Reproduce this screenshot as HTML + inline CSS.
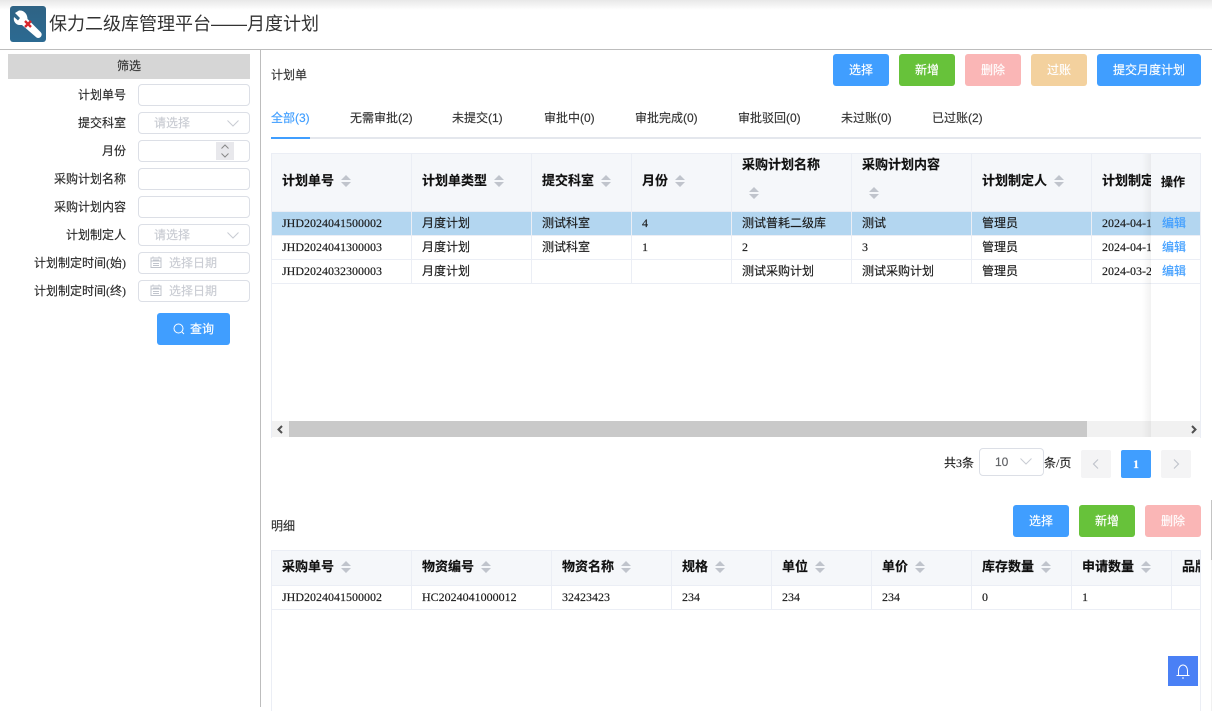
<!DOCTYPE html>
<html><head><meta charset="utf-8">
<style>
html,body{margin:0;padding:0;background:#fff}
#p{position:relative;width:1212px;height:711px;overflow:hidden;background:#fff;font:12px/16px "Liberation Serif","WenQuanYi Zen Hei","Noto Sans CJK SC",serif;color:#222;-webkit-text-stroke:.15px currentColor}
#p div,#p span.a,#p svg{position:absolute}
.t{white-space:nowrap}
.l{right:1086px;text-align:right;white-space:nowrap;color:#2a2a2a;height:16px}
.i{left:138px;width:110px;height:20px;border:1px solid #dcdfe6;border-radius:4px;background:#fff}
.ph{color:#c9ccd3;white-space:nowrap;top:2px}
.b{height:32px;border-radius:3px;color:#fff;text-align:center;line-height:32px;top:54px;white-space:nowrap}
.blue{background:#409eff}.green{background:#67c23a}.red{background:#fab6b6}.or{background:#f3d19e}
.tab{top:110px;white-space:nowrap;color:#333;font-family:"Liberation Sans","WenQuanYi Zen Hei",sans-serif}
.bg{background:#ebeef5}
.h{font-weight:bold;color:#111;white-space:nowrap}
.c{white-space:nowrap;color:#1a1a1a}
.e{color:#409eff;white-space:nowrap;left:1162px}
.s{width:10px;height:12px}
</style></head><body><div id="p">

<div style="left:0;top:0;width:1212px;height:10px;background:linear-gradient(#e8e8e8,#fff)"></div>
<svg style="left:10px;top:6px" width="36" height="36" viewBox="0 0 36 36">
<defs><linearGradient id="g" x1="0" y1="0" x2="0" y2="1"><stop offset="0" stop-color="#2f6384"/><stop offset="1" stop-color="#2c6a92"/></linearGradient></defs>
<rect width="36" height="36" rx="3" fill="url(#g)"/>
<path d="M9 4.500 L5 7 L10 12 L8 14.500 L4 11 C3 15 5.500 19 10 19 L12 19 L26.500 31.500 C28 32.500 30 32 31 30.500 C32 29 32 27.500 30.500 26 L17.500 13 C17.500 8 14 4 9 4.500Z" fill="#fff"/>
<path d="M15 15 L21 21 M21 15 L15 21" stroke="#d9262c" stroke-width="2.400"/>
</svg>
<div class="t" style="left:49px;top:12px;font:18px/24px 'Liberation Sans','WenQuanYi Zen Hei',sans-serif;color:#333;-webkit-text-stroke:0">保力二级库管理平台——月度计划</div>
<div style="left:0;top:49px;width:1212px;height:1px;background:#bdbdbd"></div>
<div style="left:260px;top:50px;width:1px;height:657px;background:#bdbdbd"></div>

<div style="left:8px;top:54px;width:242px;height:25px;background:#d6d6d6;text-align:center;line-height:24px;color:#333">筛选</div>

<div class="l" style="top:87px">计划单号</div><div class="i" style="top:84px"></div>
<div class="l" style="top:115px">提交科室</div><div class="i" style="top:112px"><div class="ph" style="left:15px">请选择</div><svg style="left:88px;top:7px" width="12" height="7" viewBox="0 0 12 7"><path d="M.5.5 6 6 11.500.5" fill="none" stroke="#c9ccd3"/></svg></div>
<div class="l" style="top:143px">月份</div><div class="i" style="top:140px"><div style="left:77px;top:1px;width:18px;height:18px;background:#e8e8ec"></div><svg style="left:81px;top:2px" width="10" height="16" viewBox="0 0 10 16"><path d="M1.500 5.500 5 2 8.500 5.500M1.500 10.500 5 14 8.500 10.500" fill="none" stroke="#888" stroke-width="1"/></svg></div>
<div class="l" style="top:171px">采购计划名称</div><div class="i" style="top:168px"></div>
<div class="l" style="top:199px">采购计划内容</div><div class="i" style="top:196px"></div>
<div class="l" style="top:227px">计划制定人</div><div class="i" style="top:224px"><div class="ph" style="left:15px">请选择</div><svg style="left:88px;top:7px" width="12" height="7" viewBox="0 0 12 7"><path d="M.5.5 6 6 11.500.5" fill="none" stroke="#c9ccd3"/></svg></div>
<div class="l" style="top:255px">计划制定时间(始)</div><div class="i" style="top:252px"><svg style="left:11px;top:3px" width="12" height="12" viewBox="0 0 12 12"><path d="M1 2h10v9.500H1zM1 5h10M3 4h6M3 .5v2M9 .5v2M3 7.500h6M3 9.500h6" fill="none" stroke="#c0c4cc"/></svg><div class="ph" style="left:30px">选择日期</div></div>
<div class="l" style="top:283px">计划制定时间(终)</div><div class="i" style="top:280px"><svg style="left:11px;top:3px" width="12" height="12" viewBox="0 0 12 12"><path d="M1 2h10v9.500H1zM1 5h10M3 4h6M3 .5v2M9 .5v2M3 7.500h6M3 9.500h6" fill="none" stroke="#c0c4cc"/></svg><div class="ph" style="left:30px">选择日期</div></div>

<div class="b blue" style="left:157px;top:313px;width:73px"><svg style="left:16px;top:10px" width="12" height="12" viewBox="0 0 12 12"><circle cx="5.500" cy="5.500" r="4.500" fill="none" stroke="#fff"/><path d="M9 9l2 2" stroke="#fff"/></svg><div style="left:33px;top:0;line-height:32px">查询</div></div>

<div class="t" style="left:271px;top:67px;color:#333">计划单</div>
<div class="b blue" style="left:833px;width:56px">选择</div>
<div class="b green" style="left:899px;width:56px">新增</div>
<div class="b red" style="left:965px;width:56px">删除</div>
<div class="b or" style="left:1031px;width:56px">过账</div>
<div class="b blue" style="left:1097px;width:104px">提交月度计划</div>

<div class="tab" style="left:271px;color:#409eff">全部(3)</div>
<div class="tab" style="left:350px">无需审批(2)</div>
<div class="tab" style="left:452px">未提交(1)</div>
<div class="tab" style="left:544px">审批中(0)</div>
<div class="tab" style="left:635px">审批完成(0)</div>
<div class="tab" style="left:738px">审批驳回(0)</div>
<div class="tab" style="left:841px">未过账(0)</div>
<div class="tab" style="left:932px">已过账(2)</div>
<div style="left:271px;top:137px;width:930px;height:2px;background:#e4e7ed"></div>
<div style="left:271px;top:137px;width:39px;height:2px;background:#409eff"></div>

<!-- table 1 -->
<div style="left:272px;top:154px;width:928px;height:57px;background:#f5f7fa"></div>
<div style="left:272px;top:212px;width:928px;height:23px;background:#b3d6f0"></div>
<div class="bg" style="left:271px;top:153px;width:930px;height:1px"></div>
<div class="bg" style="left:271px;top:153px;width:1px;height:285px"></div>
<div class="bg" style="left:1200px;top:153px;width:1px;height:285px"></div>
<div class="bg" style="left:271px;top:211px;width:930px;height:1px"></div>
<div class="bg" style="left:271px;top:235px;width:930px;height:1px"></div>
<div class="bg" style="left:271px;top:259px;width:930px;height:1px"></div>
<div class="bg" style="left:271px;top:283px;width:930px;height:1px"></div>
<div class="bg" style="left:411px;top:153px;width:1px;height:131px"></div>
<div class="bg" style="left:531px;top:153px;width:1px;height:131px"></div>
<div class="bg" style="left:631px;top:153px;width:1px;height:131px"></div>
<div class="bg" style="left:731px;top:153px;width:1px;height:131px"></div>
<div class="bg" style="left:851px;top:153px;width:1px;height:131px"></div>
<div class="bg" style="left:971px;top:153px;width:1px;height:131px"></div>
<div class="bg" style="left:1091px;top:153px;width:1px;height:131px"></div>

<div class="h" style="left:282px;top:173px;font-size:13px">计划单号</div>
<svg class="s" style="left:341px;top:175px" viewBox="0 0 10 12"><path d="M5 0 10 5H0zM0 7H10L5 12z" fill="#c0c4cc"/></svg>
<div class="h" style="left:422px;top:173px;font-size:13px">计划单类型</div>
<svg class="s" style="left:494px;top:175px" viewBox="0 0 10 12"><path d="M5 0 10 5H0zM0 7H10L5 12z" fill="#c0c4cc"/></svg>
<div class="h" style="left:542px;top:173px;font-size:13px">提交科室</div>
<svg class="s" style="left:601px;top:175px" viewBox="0 0 10 12"><path d="M5 0 10 5H0zM0 7H10L5 12z" fill="#c0c4cc"/></svg>
<div class="h" style="left:642px;top:173px;font-size:13px">月份</div>
<svg class="s" style="left:675px;top:175px" viewBox="0 0 10 12"><path d="M5 0 10 5H0zM0 7H10L5 12z" fill="#c0c4cc"/></svg>
<div class="h" style="left:742px;top:157px;font-size:13px">采购计划名称</div>
<svg class="s" style="left:749px;top:187px" viewBox="0 0 10 12"><path d="M5 0 10 5H0zM0 7H10L5 12z" fill="#c0c4cc"/></svg>
<div class="h" style="left:862px;top:157px;font-size:13px">采购计划内容</div>
<svg class="s" style="left:869px;top:187px" viewBox="0 0 10 12"><path d="M5 0 10 5H0zM0 7H10L5 12z" fill="#c0c4cc"/></svg>
<div class="h" style="left:982px;top:173px;font-size:13px">计划制定人</div>
<svg class="s" style="left:1054px;top:175px" viewBox="0 0 10 12"><path d="M5 0 10 5H0zM0 7H10L5 12z" fill="#c0c4cc"/></svg>
<div class="h" style="left:1102px;top:173px;font-size:13px">计划制定时间</div>

<div class="c" style="left:282px;top:215px">JHD2024041500002</div>
<div class="c" style="left:422px;top:215px">月度计划</div>
<div class="c" style="left:542px;top:215px">测试科室</div>
<div class="c" style="left:642px;top:215px">4</div>
<div class="c" style="left:742px;top:215px">测试普耗二级库</div>
<div class="c" style="left:862px;top:215px">测试</div>
<div class="c" style="left:982px;top:215px">管理员</div>
<div class="c" style="left:1102px;top:215px">2024-04-15</div>

<div class="c" style="left:282px;top:239px">JHD2024041300003</div>
<div class="c" style="left:422px;top:239px">月度计划</div>
<div class="c" style="left:542px;top:239px">测试科室</div>
<div class="c" style="left:642px;top:239px">1</div>
<div class="c" style="left:742px;top:239px">2</div>
<div class="c" style="left:862px;top:239px">3</div>
<div class="c" style="left:982px;top:239px">管理员</div>
<div class="c" style="left:1102px;top:239px">2024-04-13</div>

<div class="c" style="left:282px;top:263px">JHD2024032300003</div>
<div class="c" style="left:422px;top:263px">月度计划</div>
<div class="c" style="left:742px;top:263px">测试采购计划</div>
<div class="c" style="left:862px;top:263px">测试采购计划</div>
<div class="c" style="left:982px;top:263px">管理员</div>
<div class="c" style="left:1102px;top:263px">2024-03-23</div>

<!-- scrollbar -->
<div style="left:272px;top:421px;width:928px;height:16px;background:#f1f1f1"></div>
<div style="left:289px;top:421px;width:798px;height:16px;background:#c9c9c9"></div>
<svg style="left:276px;top:425px" width="8" height="9" viewBox="0 0 8 9"><path d="M6 1 2.500 4.500 6 8" fill="none" stroke="#505050" stroke-width="2"/></svg>

<!-- fixed column -->
<div style="left:1151px;top:154px;width:49px;height:57px;background:#f5f7fa"></div>
<div style="left:1151px;top:212px;width:49px;height:23px;background:#b3d6f0"></div>
<div style="left:1151px;top:236px;width:49px;height:23px;background:#fff"></div>
<div style="left:1151px;top:260px;width:49px;height:23px;background:#fff"></div>
<div style="left:1151px;top:284px;width:49px;height:137px;background:#fff"></div>
<div style="left:1151px;top:421px;width:49px;height:16px;background:#f1f1f1"></div>
<svg style="left:1190px;top:425px" width="8" height="9" viewBox="0 0 8 9"><path d="M2 1 5.500 4.500 2 8" fill="none" stroke="#505050" stroke-width="2"/></svg>
<div style="left:1142px;top:154px;width:9px;height:283px;background:linear-gradient(90deg,rgba(0,0,0,0),rgba(0,0,0,.05))"></div>
<div class="h" style="left:1161px;top:174px;font-size:12px">操作</div>
<div class="e" style="top:215px">编辑</div>
<div class="e" style="top:239px">编辑</div>
<div class="e" style="top:263px">编辑</div>

<!-- pagination -->
<div class="t" style="left:944px;top:455px;color:#222">共3条</div>
<div style="left:979px;top:448px;width:63px;height:26px;border:1px solid #dcdfe6;border-radius:4px"><div style="left:15px;top:5px;color:#606266;font-family:'Liberation Sans',sans-serif">10</div><svg style="left:40px;top:9px" width="12" height="7" viewBox="0 0 12 7"><path d="M.5.5 6 6 11.500.5" fill="none" stroke="#c9ccd3"/></svg></div>
<div class="t" style="left:1044px;top:455px;color:#222">条/页</div>
<div style="left:1081px;top:450px;width:30px;height:28px;background:#f4f4f5;border-radius:2px"><svg style="left:11px;top:9px" width="7" height="10" viewBox="0 0 7 10"><path d="M6 .5 1.500 5 6 9.500" fill="none" stroke="#c0c4cc" stroke-width="1.200"/></svg></div>
<div style="left:1121px;top:450px;width:30px;height:28px;background:#409eff;border-radius:2px;color:#fff;text-align:center;line-height:28px;font-weight:bold">1</div>
<div style="left:1161px;top:450px;width:30px;height:28px;background:#f4f4f5;border-radius:2px"><svg style="left:12px;top:9px" width="7" height="10" viewBox="0 0 7 10"><path d="M1 .5 5.500 5 1 9.500" fill="none" stroke="#c0c4cc" stroke-width="1.200"/></svg></div>

<!-- detail -->
<div class="t" style="left:271px;top:518px;color:#333">明细</div>
<div class="b blue" style="left:1013px;top:505px;width:56px">选择</div>
<div class="b green" style="left:1079px;top:505px;width:56px">新增</div>
<div class="b red" style="left:1145px;top:505px;width:56px">删除</div>

<div style="left:272px;top:551px;width:928px;height:34px;background:#f5f7fa"></div>
<div class="bg" style="left:271px;top:550px;width:930px;height:1px"></div>
<div class="bg" style="left:271px;top:550px;width:1px;height:161px"></div>
<div class="bg" style="left:1200px;top:550px;width:1px;height:161px"></div>
<div class="bg" style="left:271px;top:585px;width:930px;height:1px"></div>
<div class="bg" style="left:271px;top:609px;width:930px;height:1px"></div>
<div class="bg" style="left:411px;top:550px;width:1px;height:60px"></div>
<div class="bg" style="left:551px;top:550px;width:1px;height:60px"></div>
<div class="bg" style="left:671px;top:550px;width:1px;height:60px"></div>
<div class="bg" style="left:771px;top:550px;width:1px;height:60px"></div>
<div class="bg" style="left:871px;top:550px;width:1px;height:60px"></div>
<div class="bg" style="left:971px;top:550px;width:1px;height:60px"></div>
<div class="bg" style="left:1071px;top:550px;width:1px;height:60px"></div>
<div class="bg" style="left:1171px;top:550px;width:1px;height:60px"></div>

<div class="h" style="left:282px;top:559px;font-size:13px">采购单号</div>
<svg class="s" style="left:341px;top:561px" viewBox="0 0 10 12"><path d="M5 0 10 5H0zM0 7H10L5 12z" fill="#c0c4cc"/></svg>
<div class="h" style="left:422px;top:559px;font-size:13px">物资编号</div>
<svg class="s" style="left:481px;top:561px" viewBox="0 0 10 12"><path d="M5 0 10 5H0zM0 7H10L5 12z" fill="#c0c4cc"/></svg>
<div class="h" style="left:562px;top:559px;font-size:13px">物资名称</div>
<svg class="s" style="left:621px;top:561px" viewBox="0 0 10 12"><path d="M5 0 10 5H0zM0 7H10L5 12z" fill="#c0c4cc"/></svg>
<div class="h" style="left:682px;top:559px;font-size:13px">规格</div>
<svg class="s" style="left:715px;top:561px" viewBox="0 0 10 12"><path d="M5 0 10 5H0zM0 7H10L5 12z" fill="#c0c4cc"/></svg>
<div class="h" style="left:782px;top:559px;font-size:13px">单位</div>
<svg class="s" style="left:815px;top:561px" viewBox="0 0 10 12"><path d="M5 0 10 5H0zM0 7H10L5 12z" fill="#c0c4cc"/></svg>
<div class="h" style="left:882px;top:559px;font-size:13px">单价</div>
<svg class="s" style="left:915px;top:561px" viewBox="0 0 10 12"><path d="M5 0 10 5H0zM0 7H10L5 12z" fill="#c0c4cc"/></svg>
<div class="h" style="left:982px;top:559px;font-size:13px">库存数量</div>
<svg class="s" style="left:1041px;top:561px" viewBox="0 0 10 12"><path d="M5 0 10 5H0zM0 7H10L5 12z" fill="#c0c4cc"/></svg>
<div class="h" style="left:1082px;top:559px;font-size:13px">申请数量</div>
<svg class="s" style="left:1141px;top:561px" viewBox="0 0 10 12"><path d="M5 0 10 5H0zM0 7H10L5 12z" fill="#c0c4cc"/></svg>
<div class="h" style="left:1182px;top:559px;font-size:13px;width:18px;overflow:hidden">品牌</div>

<div class="c" style="left:282px;top:589px">JHD2024041500002</div>
<div class="c" style="left:422px;top:589px">HC2024041000012</div>
<div class="c" style="left:562px;top:589px">32423423</div>
<div class="c" style="left:682px;top:589px">234</div>
<div class="c" style="left:782px;top:589px">234</div>
<div class="c" style="left:882px;top:589px">234</div>
<div class="c" style="left:982px;top:589px">0</div>
<div class="c" style="left:1082px;top:589px">1</div>

<div style="left:1211px;top:500px;width:1px;height:60px;background:#c4c4c4"></div>
<div style="left:1211px;top:560px;width:1px;height:151px;background:#f1f1f1"></div>
<div style="left:1168px;top:656px;width:30px;height:30px;background:#4a80f5"><svg style="left:8px;top:8px" width="14" height="15" viewBox="0 0 14 15"><path d="M2.500 11V6.500C2.500 3.500 4.500 1 7 1S11.500 3.500 11.500 6.500V11M.5 11.500H13.500M6 14H8" fill="none" stroke="#fff" stroke-width="1"/></svg></div>
</div></body></html>
